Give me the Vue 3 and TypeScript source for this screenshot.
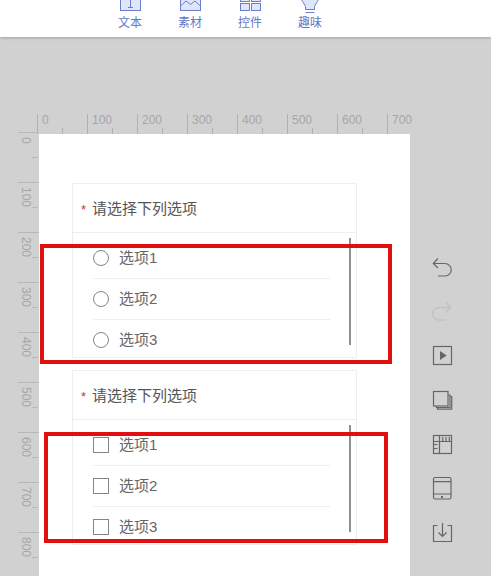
<script setup lang="ts">
const tools = ['文本', '素材', '控件', '趣味']
const topMarks = [0, 100, 200, 300, 400, 500, 600, 700]
const sideMarks = [0, 100, 200, 300, 400, 500, 600, 700, 800]
const options = ['选项1', '选项2', '选项3']
const questions = [
  { id: 1, kind: 'radio' },
  { id: 2, kind: 'check' },
]
</script>

<template>
  <div class="page">
    <header class="top-bar">
      <div v-for="(tool, i) in tools" :key="tool" class="tool">
        <svg class="tool-icon" width="24" height="13" viewBox="0 0 24 13" fill="#dfe6fa" stroke="#6b7fcc">
          <g v-if="i === 0">
            <rect x="2.5" y="-8.5" width="20" height="19" />
            <path d="M12.5 0V7M10 7.5H15" fill="none" />
          </g>
          <g v-else-if="i === 1">
            <rect x="2.5" y="-8.5" width="20" height="19" />
            <path d="M2.5 6 8 1l4.500 3.500L17 1l5.500 5" fill="none" />
          </g>
          <g v-else-if="i === 2">
            <rect x="2.5" y="-8.500" width="9" height="10" />
            <rect x="13.500" y="-8.500" width="9" height="10" />
            <rect x="2.500" y="3.500" width="9" height="7" />
            <rect x="13.500" y="3.500" width="9" height="7" />
          </g>
          <g v-else>
            <path d="M2.500-5C2.500 0 6 3 7.500 6.500V9.500H16.500V6.500C18 3 21.500 0 21.500-5Z" />
            <path d="M7.500 12.500H16.500" fill="none" />
          </g>
        </svg>
        <span class="tool-label">{{ tool }}</span>
      </div>
    </header>

    <main class="workspace">
      <div class="ruler-top">
        <div v-for="m in topMarks" :key="m" class="mark-top">{{ m }}</div>
      </div>
      <div class="ruler-side">
        <div v-for="m in sideMarks" :key="m" class="mark-side">
          <span>{{ m }}</span>
        </div>
      </div>

      <section class="canvas">
        <div v-for="q in questions" :key="q.id" class="card">
          <div class="card-title"><i class="star">*</i>请选择下列选项</div>
          <div class="card-body">
            <div v-for="opt in options" :key="opt" class="option">
              <span :class="q.kind === 'radio' ? 'radio' : 'check'"></span>
              <span class="option-text">{{ opt }}</span>
            </div>
            <div class="scrollbar"></div>
          </div>
        </div>
      </section>

      <aside class="side-tools">
        <svg width="24" height="24" viewBox="0 0 24 24" fill="none" stroke="#666" stroke-width="1.200">
          <path d="M7 2.500 2.300 7.500 7 12M2.300 7.500H14a6.200 6.200 0 0 1 0 12.500H7" />
        </svg>
        <svg width="24" height="24" viewBox="0 0 24 24" fill="none" stroke="#c2c2c2" stroke-width="1.400">
          <path d="M15 2.500 19.700 7.500 15 12M19.700 7.500H8a6.200 6.200 0 0 0 0 12.500H15" />
        </svg>
        <svg width="24" height="24" viewBox="0 0 24 24" fill="none" stroke="#666" stroke-width="1.200">
          <rect x="2.500" y="2.500" width="18" height="18" />
          <path d="M9 7V16L15.700 11.500Z" fill="#666" stroke="none" />
        </svg>
        <svg width="24" height="24" viewBox="0 0 24 24" fill="none" stroke="#666" stroke-width="1.200">
          <rect x="2.500" y="3.500" width="14.500" height="14.500" />
          <path d="M17 7H19V19.500H5.500V18M19 8.500H20.700V21.200H6.500V19.500" />
        </svg>
        <svg width="24" height="24" viewBox="0 0 24 24" fill="none" stroke="#666" stroke-width="1.200">
          <rect x="2.500" y="3.500" width="18" height="18" />
          <path d="M2.500 9.500H20.500M8.500 3.500V21.500M11.700 5V9.500M15 5V9.500M18.300 5V9.500M2.500 12.500H6.500M2.500 16.500H6.500" />
        </svg>
        <svg width="24" height="24" viewBox="0 0 24 24" fill="none" stroke="#666" stroke-width="1.200">
          <rect x="2.500" y="1.500" width="17.500" height="21.500" rx="1.500" />
          <path d="M2.500 5.700H20M2.500 18H20" />
          <rect x="10" y="20" width="2" height="2" fill="#666" stroke="none" />
        </svg>
        <svg width="24" height="24" viewBox="0 0 24 24" fill="none" stroke="#666" stroke-width="1.200">
          <path d="M6.500 5.500H2.500V21.500H20.500V5.500H16.500M11.500 3V16.500M7.500 12.500 11.500 16.500 15.500 12.500" />
        </svg>
      </aside>
    </main>

    <div class="mark-box mark-one"></div>
    <div class="mark-box mark-two"></div>
  </div>
</template>

<style scoped>
.page {
  position: relative;
  width: 491px;
  height: 576px;
  overflow: hidden;
  background: #d1d1d1;
  font-family: "Liberation Sans", "Noto Sans CJK SC", sans-serif;
}

.top-bar {
  display: flex;
  height: 37px;
  padding-left: 100px;
  background: #fff;
  box-shadow: 0 1px 3px rgba(0, 0, 0, 0.22);
}
.tool {
  display: flex;
  flex-direction: column;
  align-items: center;
  width: 60px;
}
.tool-icon {
  display: block;
  margin-bottom: 3px;
}
.tool-label {
  font-size: 12px;
  line-height: 14px;
  color: #6577c8;
}

.workspace {
  display: grid;
  grid-template-columns: 21px 371px 66px;
  grid-template-rows: 20px 442px;
  padding: 77px 0 0 18px;
}

.ruler-top {
  grid-column: 1 / 4;
  display: flex;
  padding-left: 19px;
}
.mark-top {
  position: relative;
  flex: none;
  width: 50px;
  height: 20px;
  box-sizing: border-box;
  padding-left: 4px;
  border-left: 1px solid #b0b0b0;
  font-size: 12px;
  line-height: 12px;
  color: #a6a6a6;
}
.mark-top::after {
  content: "";
  position: absolute;
  left: 24px;
  bottom: 0;
  height: 6px;
  border-left: 1px solid #b0b0b0;
}
.mark-top:last-child::after {
  display: none;
}

.ruler-side {
  margin-top: -2px;
  height: 444px;
  overflow: hidden;
}
.mark-side {
  position: relative;
  width: 21px;
  height: 50px;
  box-sizing: border-box;
  padding: 4px 0 0 1px;
  border-top: 1px solid #b8b8b8;
  font-size: 12px;
  line-height: 14px;
  color: #a6a6a6;
}
.mark-side span {
  display: block;
  writing-mode: vertical-rl;
}
.mark-side::after {
  content: "";
  position: absolute;
  right: 1px;
  top: 24px;
  width: 6px;
  border-top: 1px solid #b8b8b8;
}

.canvas {
  padding: 49px 0 0 33px;
  background: #fff;
}
.card {
  width: 285px;
  box-sizing: border-box;
  margin-bottom: 12px;
  border: 1px solid #eeeeee;
}
.card-title {
  height: 48px;
  padding-left: 8px;
  border-bottom: 1px solid #eeeeee;
  font-size: 15px;
  line-height: 50px;
  color: #555;
}
.star {
  display: inline-block;
  width: 11px;
  font-style: normal;
  font-size: 13px;
  color: #d0342c;
}
.card-body {
  position: relative;
  height: 124px;
  box-sizing: border-box;
  padding: 5px 26px 0 20px;
  overflow: hidden;
}
.option {
  display: flex;
  align-items: center;
  gap: 10px;
  height: 41px;
  box-sizing: border-box;
  border-bottom: 1px solid #eeeeee;
  font-size: 15px;
  color: #666;
}
.option:last-of-type {
  border-bottom: none;
}
.option-text {
  margin-bottom: 3px;
}
.radio,
.check {
  flex: none;
  width: 16px;
  height: 16px;
  box-sizing: border-box;
  border: 1px solid #858585;
}
.radio {
  border-radius: 50%;
}
.scrollbar {
  position: absolute;
  top: 5px;
  right: 5px;
  width: 2px;
  height: 107px;
  background: #909090;
}

.side-tools {
  display: flex;
  flex-direction: column;
  align-items: center;
  gap: 20px;
  padding-top: 122px;
}
.side-tools svg {
  flex: none;
  display: block;
}

.mark-box {
  position: absolute;
  box-sizing: border-box;
  border: 4px solid #e10f0f;
}
.mark-one {
  left: 40px;
  top: 244px;
  width: 352px;
  height: 120px;
}
.mark-two {
  left: 44px;
  top: 432px;
  width: 344px;
  height: 111px;
}
</style>
